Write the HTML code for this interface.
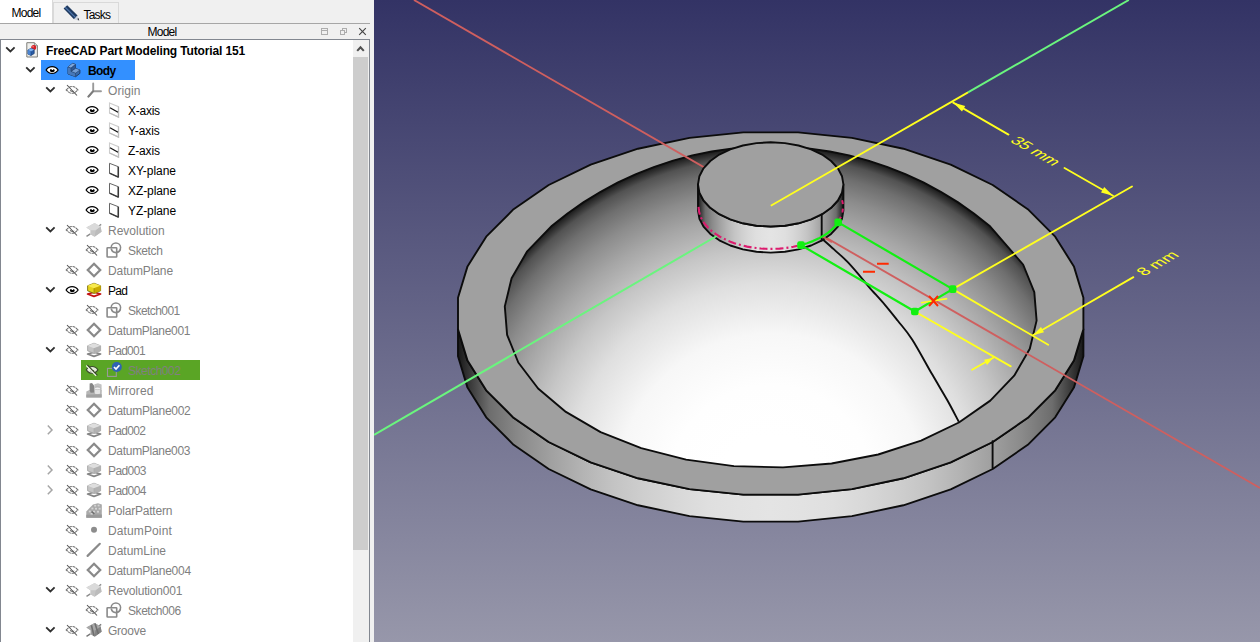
<!DOCTYPE html>
<html><head><meta charset="utf-8"><title>FreeCAD</title>
<style>
html,body{margin:0;padding:0}
body{width:1260px;height:642px;overflow:hidden;position:relative;background:#f0f0f0;font-family:"Liberation Sans",sans-serif;font-size:12px;color:#000}
#view{position:absolute;left:374px;top:0}
#tabs{position:absolute;left:0;top:0;width:370px;height:24px}
#tab1{position:absolute;left:0;top:0;width:53px;height:24px;background:#fff;border-right:1px solid #d9d9d9;box-sizing:border-box}
#tab2{position:absolute;left:53px;top:2px;width:66px;height:21px;background:#f0f0f0;border:1px solid #d9d9d9;border-bottom:none;box-sizing:border-box}
#tabline{position:absolute;left:0;top:23px;width:370px;height:1px;background:#a6a6a6}
#tab1 span{position:absolute;left:11.5px;top:6px;letter-spacing:-0.75px}
#tab2 span{position:absolute;left:29.5px;top:4.5px;letter-spacing:-0.8px}
#title{position:absolute;left:0;top:24px;width:370px;height:15px;background:#f0f0f0}
#title span{position:absolute;left:147.5px;top:1px;line-height:15px;letter-spacing:-0.75px}
#tree{position:absolute;left:0;top:39px;width:370px;height:610px;background:#fff;border:1px solid #828790;box-sizing:border-box}
#sb{position:absolute;left:353px;top:40px;width:16px;height:602px;background:#f0f0f0}
#sbt{position:absolute;left:353px;top:57px;width:15px;height:493px;background:#cdcdcd}
.ic{position:absolute;overflow:visible}
.hl{position:absolute;height:20px}
.t{position:absolute;height:20px;line-height:20px;white-space:nowrap}
.b{font-weight:bold}
.g{color:#808080}
</style></head><body>
<svg width="0" height="0" style="position:absolute">
<defs>
<symbol id="i-cv" viewBox="0 0 16 16"><path d="M4.2 5.3 L8.4 9.5 L12.6 5.3" fill="none" stroke="#2e2e2e" stroke-width="1.8"/></symbol>
<symbol id="i-cr" viewBox="0 0 16 16"><path d="M5.8 3.6 L10 7.9 L5.8 12.2" fill="none" stroke="#a6a6a6" stroke-width="1.5"/></symbol>
<symbol id="i-eye" viewBox="0 0 16 16"><path d="M2.1 8 C3.8 5.2 6 4.6 8.1 4.6 C10.2 4.6 12.4 5.2 14.1 8 C12.4 10.8 10.2 11.4 8.1 11.4 C6 11.4 3.8 10.8 2.1 8Z" fill="#fff" stroke="#000" stroke-width="1.25"/><path d="M5.9 8.4 C5.9 7.4 6.8 7 7.6 7 L7.6 7.9 L9.2 7.9 L9.2 6.9 C10.2 7 10.7 7.6 10.7 8.4 C10.7 9.4 9.6 9.9 8.3 9.9 C7 9.9 5.9 9.4 5.9 8.4Z" fill="#000"/></symbol>
<symbol id="i-hid" viewBox="0 0 16 16"><path d="M2.2 7.9 L5 5.4 C6 4.7 7 4.5 8.1 4.5 C9.2 4.5 10.2 4.7 11.2 5.4 L14 7.9 L11.2 10.4 C10.2 11.1 9.2 11.3 8.1 11.3 C7 11.3 6 11.1 5 10.4Z" fill="none" stroke="#707070" stroke-width="1.05" stroke-dasharray="3 0.7"/><path d="M6.3 8.2 C6.7 9.8 9.5 9.8 9.9 8.2" fill="none" stroke="#707070" stroke-width="1.05"/><path d="M7.6 6.4 L9.8 8.6" stroke="#fff" stroke-width="1.6"/><path d="M3 3 L13 13.5" stroke="#505050" stroke-width="1.05"/></symbol>
<symbol id="i-hidw" viewBox="0 0 16 16"><path d="M2.3 7.9 C3.9 5.2 6 4.5 8.1 4.5 C10.2 4.5 12.3 5.2 13.9 7.9 C12.3 10.6 10.2 11.3 8.1 11.3 C6 11.3 3.9 10.6 2.3 7.9Z" fill="#e3efd8" stroke="#3b4a2c" stroke-width="1.1"/><path d="M6.4 8.4 C6.8 9.8 9.4 9.8 9.8 8.4" fill="none" stroke="#3b4a2c" stroke-width="1.1"/><path d="M2.4 3.6 L12.2 13.8" stroke="#f4f8ef" stroke-width="1.5"/><path d="M3.4 3 L13.4 13.4" stroke="#3b4a2c" stroke-width="1.1"/></symbol>
<symbol id="i-doc" viewBox="0 0 16 16"><path d="M2.8 0.7 H10.4 L13.4 3.7 V15 H2.8Z" fill="#efefec" stroke="#7e7e7a" stroke-width="1"/><path d="M10.4 0.7 V3.7 H13.4" fill="#d4d4d0" stroke="#7e7e7a" stroke-width="0.8"/><circle cx="9.7" cy="5.5" r="2.5" fill="#d81e24"/><circle cx="9.1" cy="4.8" r="0.8" fill="#f08a8a"/><path d="M3.9 8 L7 6.3 L10.2 7.6 L10.2 11.6 L7 13.5 L3.9 12Z" fill="#2a5ca6" stroke="#173a6e" stroke-width="0.7" stroke-linejoin="round"/><path d="M3.9 8 L7 6.3 L10.2 7.6 L7 9.4Z" fill="#7fb0ec"/><path d="M3.9 8 L7 9.4 V13.5 L3.9 12Z" fill="#4a84d2"/><path d="M7 9.4 V13.5" stroke="#173a6e" stroke-width="0.5"/></symbol>
<symbol id="i-body" viewBox="0 0 16 16"><path d="M2 5 L6.6 1.4 L9.4 2.4 L9.4 6.4 L13.9 8 L13.9 11.4 L9.6 14.7 L2 12Z" fill="#3a6cae" stroke="#1f3c66" stroke-width="1" stroke-linejoin="round"/><path d="M2 5 L6.6 1.4 L9.4 2.4 L5 6.1Z" fill="#7ea6da"/><path d="M5 9.4 L9.4 6.4 L13.9 8 L9.6 11.2Z" fill="#739dd4"/><path d="M2 5 L5 6.1 V9.4 L9.6 11.2 V14.7 L2 12Z" fill="#4678ba"/><path d="M5 6.1 L9.4 2.4 V6.4 L5 9.4Z" fill="#2f5894"/><path d="M2 5 L5 6.1 V9.4 L9.6 11.2 V14.7 M5 6.1 L9.4 2.4 M5 9.4 L9.4 6.4 M9.6 11.2 L13.9 8" fill="none" stroke="#1f3c66" stroke-width="0.6"/></symbol>
<symbol id="i-origin" viewBox="0 0 16 16"><path d="M7.2 9.2 V1.4 M7.2 9.2 H15 M7.2 9.2 L2.4 14.6" fill="none" stroke="#9a9a9a" stroke-width="1.9" stroke-linecap="round"/><path d="M7.2 9.2 L2.4 14.6" stroke="#7c7c7c" stroke-width="1.9" stroke-linecap="round"/></symbol>
<symbol id="i-axis" viewBox="0 0 16 16"><path d="M3.5 0.9 L12.5 4.7 V15.1 L3.5 11Z" fill="none" stroke="#cdcdcd" stroke-width="1.1"/><path d="M12.5 4.7 V15.1 L3.5 11" fill="none" stroke="#bdbdbd" stroke-width="1.3"/><path d="M4 5.7 L12 10.3" stroke="#111" stroke-width="1.25"/></symbol>
<symbol id="i-plane" viewBox="0 0 16 16"><path d="M3.5 1.3 L12.3 4.7 V15.1 L3.5 11.1Z" fill="#fff" stroke="#666" stroke-width="1" stroke-linejoin="round"/><path d="M12.3 4.7 V15.1 L3.5 11.1" fill="none" stroke="#3a3a3a" stroke-width="1.5" stroke-linejoin="round"/></symbol>
<symbol id="i-rev" viewBox="0 0 16 16"><path d="M0.5 14.3 L4.4 11.8 M12.8 4 L15.2 2.4" stroke="#8c8c8c" stroke-width="1.4" fill="none"/><path d="M0.4 5.6 L8.6 1 L14.6 4.4 L15.6 9.8 L8.6 14.8 L4.5 12.3 L4.6 8.3Z" fill="#d0d0d0"/><path d="M8.6 14.8 L15.6 9.8 L14.6 4.4 L9.4 8.2Z" fill="#bcbcbc"/><path d="M0.4 5.6 L4.6 8.3 L4.5 12.3 L8.6 14.8 L9.4 8.2 L3 4.2Z" fill="#c6c6c6"/><path d="M0.4 5.6 L8.6 1 L14.6 4.4 L9.4 8.2 L4.6 8.3Z" fill="#dadada"/></symbol>
<symbol id="i-groove" viewBox="0 0 16 16"><path d="M0.5 14.3 L4.4 11.8 M12.8 4 L15.2 2.4" stroke="#777" stroke-width="1.4" fill="none"/><path d="M0.4 5.6 L8.6 1 L14.6 4.4 L15.6 9.8 L8.6 14.8 L4.5 12.3 L4.6 8.3Z" fill="#9a9a9a"/><path d="M8.6 14.8 L15.6 9.8 L14.6 4.4 L9.4 8.2Z" fill="#828282"/><path d="M0.4 5.6 L8.6 1 L14.6 4.4 L9.4 8.2 L4.6 8.3Z" fill="#a8a8a8"/><path d="M5.4 3.2 L8 13.8 M9 1.6 L12.4 12" stroke="#6f6f6f" stroke-width="1.6" fill="none"/></symbol>
<symbol id="i-sketch" viewBox="0 0 16 16"><circle cx="9.9" cy="5.6" r="4.7" fill="#fff" stroke="#8a8a8a" stroke-width="1.5"/><rect x="1.1" y="5.8" width="9.6" height="9.2" rx="0.5" fill="#fff" fill-opacity="0.5" stroke="#8a8a8a" stroke-width="1.6"/><path d="M5.3 6.9 A4.7 4.7 0 0 0 14.5 6.9" fill="none" stroke="#8a8a8a" stroke-width="1.5"/></symbol>
<symbol id="i-sketchk" viewBox="0 0 16 16"><rect x="1.5" y="6.4" width="8.8" height="8" fill="none" stroke="#9a9a9a" stroke-width="1.1"/><circle cx="10.8" cy="5" r="5" fill="#2f63b4"/><path d="M8 5 L10 7 L13.4 3.2" fill="none" stroke="#fff" stroke-width="1.7"/></symbol>
<symbol id="i-dplane" viewBox="0 0 16 16"><path d="M8 1.8 L14.2 8 L8 14.2 L1.8 8Z" fill="#fff" stroke="#8a8a8a" stroke-width="2.3" stroke-linejoin="miter"/></symbol>
<symbol id="i-pad" viewBox="0 0 16 16"><path d="M1.6 12 L8 10.2 L14.6 12 L8 14.4Z" fill="#fff" stroke="#c31212" stroke-width="1.7" stroke-linejoin="round"/><path d="M1.6 3.8 L8 1.2 L14.6 3.8 V8.8 L8 11.4 L1.6 8.8Z" fill="#e6d21c" stroke="#6e6200" stroke-width="0.8" stroke-linejoin="round"/><path d="M1.6 3.8 L8 1.2 L14.6 3.8 L8 6.2Z" fill="#f8ea4e"/><path d="M8 6.2 L14.6 3.8 V8.8 L8 11.4Z" fill="#c9aa00"/><path d="M8 6.2 V11.4" stroke="#8a7a00" stroke-width="0.6"/></symbol>
<symbol id="i-padg" viewBox="0 0 16 16"><path d="M1.6 12 L8 10.2 L14.6 12 L8 14.4Z" fill="#fff" stroke="#858585" stroke-width="1.7" stroke-linejoin="round"/><path d="M1.6 3.8 L8 1.2 L14.6 3.8 V8.8 L8 11.4 L1.6 8.8Z" fill="#c4c4c4" stroke="#a0a0a0" stroke-width="0.8" stroke-linejoin="round"/><path d="M1.6 3.8 L8 1.2 L14.6 3.8 L8 6.2Z" fill="#dedede"/><path d="M8 6.2 L14.6 3.8 V8.8 L8 11.4Z" fill="#b2b2b2"/><path d="M8 6.2 V11.4" stroke="#a8a8a8" stroke-width="0.6"/></symbol>
<symbol id="i-mirror" viewBox="0 0 16 16"><path d="M0.3 9.4 L3.4 8 H15.7 V15.6 H0.3Z" fill="#b6b6b6"/><path d="M3.6 1.6 L6 1.1 L8.4 4 V10.4 L4.6 10.8 L3.6 8Z" fill="#858585"/><path d="M8.4 2.2 L12 1.2 L15.6 2.6 V9.6 L8.4 9.6Z" fill="#c2c2c2"/><path d="M8.4 6.4 C8.4 4.6 14.6 4.6 14.6 6.4 V11.2 C14.6 13 8.4 13 8.4 11.2Z" fill="#e4e4e4" stroke="#a8a8a8" stroke-width="0.6"/><ellipse cx="11.5" cy="6.4" rx="3.1" ry="1.2" fill="#f1f1f1" stroke="#a8a8a8" stroke-width="0.5"/><path d="M0.3 12.6 L15.7 12.2 V15.6 H0.3Z" fill="#a2a2a2"/></symbol>
<symbol id="i-polar" viewBox="0 0 16 16"><path d="M0.3 15.7 V9.4 L7 2.4 L12 1.2 L15.8 2.4 V15.7Z" fill="#a9a9a9"/><path d="M0.3 12.8 L15.8 12.4 V15.7 H0.3Z" fill="#999"/><g fill="#d4d4d4"><rect x="8.2" y="2.8" width="2" height="1.8"/><rect x="11.6" y="2.6" width="2" height="1.8"/><rect x="5.4" y="5.6" width="2" height="1.8"/><rect x="9" y="5.8" width="2" height="1.8"/><rect x="12.6" y="5.8" width="2" height="1.8"/><rect x="2.8" y="8.6" width="2" height="1.8"/><rect x="7" y="8.8" width="2" height="1.8"/><rect x="11" y="8.8" width="2" height="1.8"/><rect x="4.6" y="11" width="2.2" height="1.6"/></g><path d="M5.6 9.6 L8.4 11.8" stroke="#6f6f6f" stroke-width="1.6"/></symbol>
<symbol id="i-dpoint" viewBox="0 0 16 16"><circle cx="8" cy="7.8" r="3" fill="#8c8c8c"/></symbol>
<symbol id="i-dline" viewBox="0 0 16 16"><path d="M1.6 13.9 L13.8 1.8" stroke="#8a8a8a" stroke-width="2.2" stroke-linecap="round"/></symbol>
<symbol id="i-pencil" viewBox="0 0 18 18"><path d="M1.6 4.6 L5.2 1.2 L15.6 11.6 L12 15.2Z" fill="#1f3a60"/><path d="M3.2 3.2 L13.6 13.6" stroke="#4c74aa" stroke-width="1.3"/><path d="M12 15.2 L15.6 11.6 L17.2 16.8Z" fill="#cfd6e0"/><path d="M15.4 15 L16.4 14 L17.2 16.8Z" fill="#111"/></symbol>
<symbol id="i-t1" viewBox="0 0 9 9"><rect x="1.5" y="1.5" width="6" height="6" fill="none" stroke="#adadad" stroke-width="1"/><path d="M1.5 3.5 H7.5" stroke="#adadad" stroke-width="1"/></symbol>
<symbol id="i-t2" viewBox="0 0 9 9"><rect x="3.5" y="1.5" width="4" height="4" fill="none" stroke="#adadad" stroke-width="1"/><rect x="1.5" y="3.5" width="4" height="4" fill="#f0f0f0" stroke="#adadad" stroke-width="1"/></symbol>
<symbol id="i-t3" viewBox="0 0 9 9"><path d="M1.2 1.2 L7.8 7.8 M7.8 1.2 L1.2 7.8" stroke="#444" stroke-width="1.15"/></symbol>
<symbol id="i-sbup" viewBox="0 0 16 17"><path d="M4.2 10.9 L7.5 7.3 L10.8 10.9" fill="none" stroke="#505050" stroke-width="2.1"/></symbol>
</defs>
</svg>

<div id="tabs"><div id="tab1"><span>Model</span></div><div id="tab2"><svg class="ic" style="left:8px;top:1px" width="18" height="18"><use href="#i-pencil"/></svg><span>Tasks</span></div><div id="tabline"></div></div>
<div id="title"><span>Model</span><svg class="ic" style="left:320px;top:3px" width="9" height="9"><use href="#i-t1"/></svg><svg class="ic" style="left:339px;top:3px" width="9" height="9"><use href="#i-t2"/></svg><svg class="ic" style="left:358px;top:3px" width="9" height="9"><use href="#i-t3"/></svg></div>
<div id="tree"></div>
<div id="sb"></div><div id="sbt"></div><svg class="ic" style="left:353px;top:40px" width="16" height="17"><use href="#i-sbup"/></svg>
<svg class="ic" style="left:2px;top:42px" width="16" height="16"><use href="#i-cv"/></svg><svg class="ic" style="left:24px;top:42px" width="16" height="16"><use href="#i-doc"/></svg><span class="t b" id="r0" style="left:46px;top:41px;letter-spacing:-0.142px">FreeCAD Part Modeling Tutorial 151</span>
<div class="hl" style="left:41px;top:60px;width:94px;background:#3390ff"></div><svg class="ic" style="left:22px;top:62px" width="16" height="16"><use href="#i-cv"/></svg><svg class="ic" style="left:44px;top:62px" width="16" height="16"><use href="#i-eye"/></svg><svg class="ic" style="left:66px;top:62px" width="16" height="16"><use href="#i-body"/></svg><span class="t b" id="r1" style="left:88px;top:61px;letter-spacing:-0.650px">Body</span>
<svg class="ic" style="left:42px;top:82px" width="16" height="16"><use href="#i-cv"/></svg><svg class="ic" style="left:64px;top:82px" width="16" height="16"><use href="#i-hid"/></svg><svg class="ic" style="left:86px;top:82px" width="16" height="16"><use href="#i-origin"/></svg><span class="t g" id="r2" style="left:108px;top:81px;letter-spacing:0.081px">Origin</span>
<svg class="ic" style="left:84px;top:102px" width="16" height="16"><use href="#i-eye"/></svg><svg class="ic" style="left:106px;top:102px" width="16" height="16"><use href="#i-axis"/></svg><span class="t " id="r3" style="left:128px;top:101px;letter-spacing:-0.257px">X-axis</span>
<svg class="ic" style="left:84px;top:122px" width="16" height="16"><use href="#i-eye"/></svg><svg class="ic" style="left:106px;top:122px" width="16" height="16"><use href="#i-axis"/></svg><span class="t " id="r4" style="left:128px;top:121px;letter-spacing:-0.075px">Y-axis</span>
<svg class="ic" style="left:84px;top:142px" width="16" height="16"><use href="#i-eye"/></svg><svg class="ic" style="left:106px;top:142px" width="16" height="16"><use href="#i-axis"/></svg><span class="t " id="r5" style="left:128px;top:141px;letter-spacing:-0.145px">Z-axis</span>
<svg class="ic" style="left:84px;top:162px" width="16" height="16"><use href="#i-eye"/></svg><svg class="ic" style="left:106px;top:162px" width="16" height="16"><use href="#i-plane"/></svg><span class="t " id="r6" style="left:128px;top:161px;letter-spacing:-0.033px">XY-plane</span>
<svg class="ic" style="left:84px;top:182px" width="16" height="16"><use href="#i-eye"/></svg><svg class="ic" style="left:106px;top:182px" width="16" height="16"><use href="#i-plane"/></svg><span class="t " id="r7" style="left:128px;top:181px;letter-spacing:-0.088px">XZ-plane</span>
<svg class="ic" style="left:84px;top:202px" width="16" height="16"><use href="#i-eye"/></svg><svg class="ic" style="left:106px;top:202px" width="16" height="16"><use href="#i-plane"/></svg><span class="t " id="r8" style="left:128px;top:201px;letter-spacing:-0.088px">YZ-plane</span>
<svg class="ic" style="left:42px;top:222px" width="16" height="16"><use href="#i-cv"/></svg><svg class="ic" style="left:64px;top:222px" width="16" height="16"><use href="#i-hid"/></svg><svg class="ic" style="left:86px;top:222px" width="16" height="16"><use href="#i-rev"/></svg><span class="t g" id="r9" style="left:108px;top:221px;letter-spacing:-0.010px">Revolution</span>
<svg class="ic" style="left:84px;top:242px" width="16" height="16"><use href="#i-hid"/></svg><svg class="ic" style="left:106px;top:242px" width="16" height="16"><use href="#i-sketch"/></svg><span class="t g" id="r10" style="left:128px;top:241px;letter-spacing:-0.365px">Sketch</span>
<svg class="ic" style="left:64px;top:262px" width="16" height="16"><use href="#i-hid"/></svg><svg class="ic" style="left:86px;top:262px" width="16" height="16"><use href="#i-dplane"/></svg><span class="t g" id="r11" style="left:108px;top:261px;letter-spacing:-0.105px">DatumPlane</span>
<svg class="ic" style="left:42px;top:282px" width="16" height="16"><use href="#i-cv"/></svg><svg class="ic" style="left:64px;top:282px" width="16" height="16"><use href="#i-eye"/></svg><svg class="ic" style="left:86px;top:282px" width="16" height="16"><use href="#i-pad"/></svg><span class="t " id="r12" style="left:108px;top:281px;letter-spacing:-0.686px">Pad</span>
<svg class="ic" style="left:84px;top:302px" width="16" height="16"><use href="#i-hid"/></svg><svg class="ic" style="left:106px;top:302px" width="16" height="16"><use href="#i-sketch"/></svg><span class="t g" id="r13" style="left:128px;top:301px;letter-spacing:-0.558px">Sketch001</span>
<svg class="ic" style="left:64px;top:322px" width="16" height="16"><use href="#i-hid"/></svg><svg class="ic" style="left:86px;top:322px" width="16" height="16"><use href="#i-dplane"/></svg><span class="t g" id="r14" style="left:108px;top:321px;letter-spacing:-0.297px">DatumPlane001</span>
<svg class="ic" style="left:42px;top:342px" width="16" height="16"><use href="#i-cv"/></svg><svg class="ic" style="left:64px;top:342px" width="16" height="16"><use href="#i-hid"/></svg><svg class="ic" style="left:86px;top:342px" width="16" height="16"><use href="#i-padg"/></svg><span class="t g" id="r15" style="left:108px;top:341px;letter-spacing:-0.762px">Pad001</span>
<div class="hl" style="left:81px;top:360px;width:119px;background:#5aa525"></div><svg class="ic" style="left:84px;top:362px" width="16" height="16"><use href="#i-hidw"/></svg><svg class="ic" style="left:106px;top:362px" width="16" height="16"><use href="#i-sketchk"/></svg><span class="t g" id="r16" style="left:128px;top:361px;letter-spacing:-0.469px">Sketch002</span>
<svg class="ic" style="left:64px;top:382px" width="16" height="16"><use href="#i-hid"/></svg><svg class="ic" style="left:86px;top:382px" width="16" height="16"><use href="#i-mirror"/></svg><span class="t g" id="r17" style="left:108px;top:381px;letter-spacing:0.104px">Mirrored</span>
<svg class="ic" style="left:64px;top:402px" width="16" height="16"><use href="#i-hid"/></svg><svg class="ic" style="left:86px;top:402px" width="16" height="16"><use href="#i-dplane"/></svg><span class="t g" id="r18" style="left:108px;top:401px;letter-spacing:-0.274px">DatumPlane002</span>
<svg class="ic" style="left:42px;top:422px" width="16" height="16"><use href="#i-cr"/></svg><svg class="ic" style="left:64px;top:422px" width="16" height="16"><use href="#i-hid"/></svg><svg class="ic" style="left:86px;top:422px" width="16" height="16"><use href="#i-padg"/></svg><span class="t g" id="r19" style="left:108px;top:421px;letter-spacing:-0.696px">Pad002</span>
<svg class="ic" style="left:64px;top:442px" width="16" height="16"><use href="#i-hid"/></svg><svg class="ic" style="left:86px;top:442px" width="16" height="16"><use href="#i-dplane"/></svg><span class="t g" id="r20" style="left:108px;top:441px;letter-spacing:-0.297px">DatumPlane003</span>
<svg class="ic" style="left:42px;top:462px" width="16" height="16"><use href="#i-cr"/></svg><svg class="ic" style="left:64px;top:462px" width="16" height="16"><use href="#i-hid"/></svg><svg class="ic" style="left:86px;top:462px" width="16" height="16"><use href="#i-padg"/></svg><span class="t g" id="r21" style="left:108px;top:461px;letter-spacing:-0.579px">Pad003</span>
<svg class="ic" style="left:42px;top:482px" width="16" height="16"><use href="#i-cr"/></svg><svg class="ic" style="left:64px;top:482px" width="16" height="16"><use href="#i-hid"/></svg><svg class="ic" style="left:86px;top:482px" width="16" height="16"><use href="#i-padg"/></svg><span class="t g" id="r22" style="left:108px;top:481px;letter-spacing:-0.579px">Pad004</span>
<svg class="ic" style="left:64px;top:502px" width="16" height="16"><use href="#i-hid"/></svg><svg class="ic" style="left:86px;top:502px" width="16" height="16"><use href="#i-polar"/></svg><span class="t g" id="r23" style="left:108px;top:501px;letter-spacing:-0.209px">PolarPattern</span>
<svg class="ic" style="left:64px;top:522px" width="16" height="16"><use href="#i-hid"/></svg><svg class="ic" style="left:86px;top:522px" width="16" height="16"><use href="#i-dpoint"/></svg><span class="t g" id="r24" style="left:108px;top:521px;letter-spacing:0.120px">DatumPoint</span>
<svg class="ic" style="left:64px;top:542px" width="16" height="16"><use href="#i-hid"/></svg><svg class="ic" style="left:86px;top:542px" width="16" height="16"><use href="#i-dline"/></svg><span class="t g" id="r25" style="left:108px;top:541px;letter-spacing:-0.003px">DatumLine</span>
<svg class="ic" style="left:64px;top:562px" width="16" height="16"><use href="#i-hid"/></svg><svg class="ic" style="left:86px;top:562px" width="16" height="16"><use href="#i-dplane"/></svg><span class="t g" id="r26" style="left:108px;top:561px;letter-spacing:-0.243px">DatumPlane004</span>
<svg class="ic" style="left:42px;top:582px" width="16" height="16"><use href="#i-cv"/></svg><svg class="ic" style="left:64px;top:582px" width="16" height="16"><use href="#i-hid"/></svg><svg class="ic" style="left:86px;top:582px" width="16" height="16"><use href="#i-rev"/></svg><span class="t g" id="r27" style="left:108px;top:581px;letter-spacing:-0.195px">Revolution001</span>
<svg class="ic" style="left:84px;top:602px" width="16" height="16"><use href="#i-hid"/></svg><svg class="ic" style="left:106px;top:602px" width="16" height="16"><use href="#i-sketch"/></svg><span class="t g" id="r28" style="left:128px;top:601px;letter-spacing:-0.435px">Sketch006</span>
<svg class="ic" style="left:42px;top:622px" width="16" height="16"><use href="#i-cv"/></svg><svg class="ic" style="left:64px;top:622px" width="16" height="16"><use href="#i-hid"/></svg><svg class="ic" style="left:86px;top:622px" width="16" height="16"><use href="#i-groove"/></svg><span class="t g" id="r29" style="left:108px;top:621px;letter-spacing:-0.243px">Groove</span>
<svg id="view" width="886" height="642" viewBox="374 0 886 642">
<defs>
<linearGradient id="bg" x1="0" y1="0" x2="0" y2="1"><stop offset="0" stop-color="#333365"/><stop offset="1" stop-color="#9797aa"/></linearGradient>
<radialGradient id="dome" gradientUnits="userSpaceOnUse" cx="770.7" cy="487.2" r="340.9"><stop offset="0%" stop-color="#ffffff"/><stop offset="15%" stop-color="#ffffff"/><stop offset="30%" stop-color="#fefefe"/><stop offset="45%" stop-color="#f7f7f7"/><stop offset="60%" stop-color="#dfdfdf"/><stop offset="70%" stop-color="#c6c6c6"/><stop offset="80%" stop-color="#a6a6a6"/><stop offset="87%" stop-color="#8c8c8c"/><stop offset="93%" stop-color="#6f6f6f"/><stop offset="97%" stop-color="#525252"/><stop offset="100%" stop-color="#181818"/></radialGradient>
<linearGradient id="rimside" gradientUnits="userSpaceOnUse" x1="458" y1="0" x2="1083.4" y2="0"><stop offset="0%" stop-color="#181818"/><stop offset="5%" stop-color="#6d6d6d"/><stop offset="10%" stop-color="#8b8b8b"/><stop offset="15%" stop-color="#a1a1a1"/><stop offset="20%" stop-color="#b4b4b4"/><stop offset="25%" stop-color="#c4c4c4"/><stop offset="30%" stop-color="#cfcfcf"/><stop offset="35%" stop-color="#d8d8d8"/><stop offset="40%" stop-color="#dfdfdf"/><stop offset="45%" stop-color="#e2e2e2"/><stop offset="50%" stop-color="#e4e4e4"/><stop offset="55%" stop-color="#e2e2e2"/><stop offset="60%" stop-color="#dfdfdf"/><stop offset="65%" stop-color="#d8d8d8"/><stop offset="70%" stop-color="#cfcfcf"/><stop offset="75%" stop-color="#c4c4c4"/><stop offset="80%" stop-color="#b4b4b4"/><stop offset="85%" stop-color="#a1a1a1"/><stop offset="90%" stop-color="#8b8b8b"/><stop offset="95%" stop-color="#6d6d6d"/><stop offset="100%" stop-color="#181818"/></linearGradient>
<linearGradient id="cylside" gradientUnits="userSpaceOnUse" x1="698" y1="0" x2="843.4" y2="0"><stop offset="0%" stop-color="#181818"/><stop offset="5%" stop-color="#6d6d6d"/><stop offset="10%" stop-color="#8b8b8b"/><stop offset="15%" stop-color="#a1a1a1"/><stop offset="20%" stop-color="#b4b4b4"/><stop offset="25%" stop-color="#c4c4c4"/><stop offset="30%" stop-color="#cfcfcf"/><stop offset="35%" stop-color="#d8d8d8"/><stop offset="40%" stop-color="#dfdfdf"/><stop offset="45%" stop-color="#e2e2e2"/><stop offset="50%" stop-color="#e4e4e4"/><stop offset="55%" stop-color="#e2e2e2"/><stop offset="60%" stop-color="#dfdfdf"/><stop offset="65%" stop-color="#d8d8d8"/><stop offset="70%" stop-color="#cfcfcf"/><stop offset="75%" stop-color="#c4c4c4"/><stop offset="80%" stop-color="#b4b4b4"/><stop offset="85%" stop-color="#a1a1a1"/><stop offset="90%" stop-color="#8b8b8b"/><stop offset="95%" stop-color="#6d6d6d"/><stop offset="100%" stop-color="#181818"/></linearGradient>
</defs>
<rect x="374" y="0" width="886" height="642" fill="url(#bg)"/>
<path d="M1083.4 329.3 L1073.9 360.6 L1055.2 390.3 L1027.8 417.8 L992.7 442 L950.7 462.4 L903.4 478.3 L851.9 489.1 L798.1 494.6 L743.3 494.6 L689.5 489.1 L638 478.3 L590.7 462.4 L548.7 442 L513.6 417.8 L486.2 390.3 L467.5 360.6 L458 329.3 L458 356.3 L467.5 387.6 L486.2 417.3 L513.6 444.8 L548.7 469 L590.7 489.4 L638 505.3 L689.5 516.1 L743.3 521.6 L798.1 521.6 L851.9 516.1 L903.4 505.3 L950.7 489.4 L992.7 469 L1027.8 444.8 L1055.2 417.3 L1073.9 387.6 L1083.4 356.3Z" fill="url(#rimside)" stroke="#0c0c0c" stroke-width="1.9" stroke-linejoin="round" stroke-linecap="round"/>
<path d="M1083.4 329.3 L1073.9 360.6 L1055.2 390.3 L1027.8 417.8 L992.7 442 L950.7 462.4 L903.4 478.3 L851.9 489.1 L798.1 494.6 L743.3 494.6 L689.5 489.1 L638 478.3 L590.7 462.4 L548.7 442 L513.6 417.8 L486.2 390.3 L467.5 360.6 L458 329.3 L458 297.7 L467.5 266.4 L486.2 236.7 L513.6 209.2 L548.7 185 L590.7 164.6 L638 148.7 L689.5 137.9 L743.3 132.4 L798.1 132.4 L851.9 137.9 L903.4 148.7 L950.7 164.6 L992.7 185 L1027.8 209.2 L1055.2 236.7 L1073.9 266.4 L1083.4 297.7Z" fill="#a0a0a0" stroke="#0c0c0c" stroke-width="1.9" stroke-linejoin="round" stroke-linecap="round"/>
<path d="M552 225.7 L567.5 213.5 L583.7 202.1 L600.6 191.8 L618 182.4 L636 174.1 L654.4 166.8 L673.1 160.6 L692.3 155.4 L711.6 151.5 L731.2 148.6 L750.9 146.9 L770.7 146.3 L790.5 146.9 L810.2 148.6 L829.8 151.5 L849.1 155.4 L868.3 160.6 L887 166.8 L905.4 174.1 L923.4 182.4 L940.8 191.8 L957.7 202.1 L973.9 213.5 L989.4 225.7 L1023.1 264.5 L1034.3 292.2 L1036.6 320.6 L1029.8 348.8 L1014.2 375.7 L990.3 400.6 L958.9 422.5 L921.1 440.6 L878.2 454.5 L831.6 463.5 L783 467.4 L733.9 466.1 L686.1 459.6 L641.2 448.1 L600.6 432.1 L565.9 411.9 L538.1 388.5 L518.3 362.5 L507.1 334.8 L504.8 306.4 L511.6 278.2 L527.2 251.3Z" fill="url(#dome)" stroke="#0c0c0c" stroke-width="1.9" stroke-linejoin="round" stroke-linecap="round"/>
<path d="M992.6 441.1 V468.1" stroke="#0c0c0c" stroke-width="1.9" stroke-linejoin="round" stroke-linecap="round" fill="none"/>
<path d="M821.8 238.5 C823.8 240.3 829.8 245.5 834 249.4 C838.2 253.3 843 257.2 847.3 261.7 C851.6 266.1 856.3 271.8 860 276.1 C863.7 280.5 865.6 283 869.7 287.8 C873.9 292.6 880.2 299.3 884.9 304.8 C889.6 310.3 893.4 315.2 898 321 C902.6 326.8 906.6 330.8 912.3 339.7 C918 348.6 926.5 364.6 932.3 374.6 C938.1 384.7 942.9 392.3 947.2 400 C951.6 407.7 956.5 417.5 958.4 421" fill="none" stroke="#0c0c0c" stroke-width="1.9" stroke-linejoin="round" stroke-linecap="round"/>
<path d="M414 0 L1260 488" stroke="#cf5f5f" stroke-width="1.9" fill="none"/>
<path d="M843.4 184.4 L842 192.6 L837.9 200.5 L831.1 207.8 L822.1 214.2 L811.1 219.4 L798.5 223.3 L784.9 225.7 L770.7 226.5 L756.5 225.7 L742.9 223.3 L730.3 219.4 L719.3 214.2 L710.3 207.8 L703.5 200.5 L699.4 192.6 L698 184.4 L698 210.5 L699.4 218.7 L703.5 226.6 L710.3 233.9 L719.3 240.3 L730.3 245.5 L742.9 249.4 L756.5 251.8 L770.7 252.6 L784.9 251.8 L798.5 249.4 L811.1 245.5 L822.1 240.3 L831.1 233.9 L837.9 226.6 L842 218.7 L843.4 210.5Z" fill="url(#cylside)" stroke="#0c0c0c" stroke-width="1.9" stroke-linejoin="round" stroke-linecap="round"/>
<path d="M843.4 184.4 L842 192.6 L837.9 200.5 L831.1 207.8 L822.1 214.2 L811.1 219.4 L798.5 223.3 L784.9 225.7 L770.7 226.5 L756.5 225.7 L742.9 223.3 L730.3 219.4 L719.3 214.2 L710.3 207.8 L703.5 200.5 L699.4 192.6 L698 184.4 L699.4 176.2 L703.5 168.3 L710.3 161 L719.3 154.6 L730.3 149.4 L742.9 145.5 L756.5 143.1 L770.7 142.3 L784.9 143.1 L798.5 145.5 L811.1 149.4 L822.1 154.6 L831.1 161 L837.9 168.3 L842 176.2 L843.4 184.4Z" fill="#a0a0a0" stroke="#0c0c0c" stroke-width="1.9" stroke-linejoin="round" stroke-linecap="round"/>
<path d="M821.7 214.4 V240.5" stroke="#0c0c0c" stroke-width="1.9" stroke-linejoin="round" stroke-linecap="round" fill="none"/>
<path d="M374 435 L718.4 235" stroke="#6af57e" stroke-width="2" fill="none"/>
<path d="M698.6 206.8 L698.8 209.5 L699.2 212.3 L700 215 L701 217.6 L702.4 220.3 L704 222.8 L706 225.3 L708.2 227.8 L710.6 230.1 L713.4 232.3 L716.3 234.5 L719.5 236.5 L723 238.3 L726.6 240.1 L730.4 241.7 L734.4 243.2 L738.5 244.5 L742.8 245.6 L747.1 246.6 L751.6 247.4 L756.2 248 L760.8 248.5 L765.5 248.8 L770.2 248.9 L774.9 248.8 L779.6 248.6 L784.2 248.2 L788.8 247.6 L793.3 246.8 L797.7 245.8" fill="none" stroke="#dc1c6e" stroke-width="2.1" stroke-dasharray="8 3 2 3"/>
<path d="M842.1 200.2 L842.7 202.9 L843 205.7 L842.9 208.5 L842.6 211.2 L842 213.9 L841 216.6 L839.7 219.3 L838.2 221.9" fill="none" stroke="#dc1c6e" stroke-width="2" stroke-dasharray="4 4.5"/>
<path d="M822 236.3 L832 242.1" stroke="#cf5f5f" stroke-width="1.9" fill="none"/>
<path d="M770.8 205.8 L968 92.4" stroke="#ffff1e" stroke-width="1.8" fill="none"/>
<path d="M968 92.4 L1128.8 0" stroke="#6af57e" stroke-width="2" fill="none"/>
<path d="M952.7 289.1 L1132 186.5" stroke="#ffff1e" stroke-width="1.8" fill="none" stroke-linecap="round"/>
<path d="M952.7 289.1 L1048.2 344.8" stroke="#ffff1e" stroke-width="1.8" fill="none" stroke-linecap="round"/>
<path d="M914.8 311.5 L1010.8 366.4" stroke="#ffff1e" stroke-width="1.8" fill="none" stroke-linecap="round"/>
<path d="M953.2 102.6 L1008.5 134.6 M1064.5 168 L1113 195.8" stroke="#ffff1e" stroke-width="1.8" fill="none" stroke-linecap="round"/>
<path d="M953.2 102.6 L965.2 105.9 L962 111.4 Z" fill="#ffff1e"/>
<path d="M1113 195.8 L1101 192.5 L1104.2 187 Z" fill="#ffff1e"/>
<path d="M1133.4 277.1 L1033 335.2" stroke="#ffff1e" stroke-width="1.8" fill="none" stroke-linecap="round"/>
<path d="M1033 335.2 L1041 327.1 L1044 332.3 Z" fill="#ffff1e"/>
<path d="M972.1 369.8 L993.3 357.8" stroke="#ffff1e" stroke-width="1.8" fill="none" stroke-linecap="round"/>
<path d="M993.3 357.8 L987 364.9 L984 359.7 Z" fill="#ffff1e"/>
<text transform="matrix(0.8660 0.5000 -0.8227 0.4750 1009.3 141.2)" font-family="'Liberation Sans',sans-serif" font-size="16.5" fill="#ffff1e">35 mm</text>
<text transform="matrix(0.8660 -0.5000 0.8227 0.4750 1144.2 276.3)" font-family="'Liberation Sans',sans-serif" font-size="16.5" fill="#ffff1e">8 mm</text>
<path d="M838.2 222.4 L835.4 226.1 L831.9 229.5 L827.9 232.8 L823.4 235.8 L818.4 238.6 L812.9 241.1 L807.1 243.2 L801 245.1" stroke="#12f012" stroke-width="2.2" fill="none" stroke-linecap="round" stroke-linejoin="round"/>
<path d="M838.2 222.4 L952.7 289.1 L914.8 311.5 L801 245.1" stroke="#12f012" stroke-width="2.2" fill="none" stroke-linecap="round" stroke-linejoin="round"/>
<rect x="834.4" y="218.6" width="7.6" height="7.6" rx="2.2" fill="#12f012"/>
<rect x="797.2" y="241.3" width="7.6" height="7.6" rx="2.2" fill="#12f012"/>
<rect x="948.9" y="285.3" width="7.6" height="7.6" rx="2.2" fill="#12f012"/>
<rect x="911" y="307.7" width="7.6" height="7.6" rx="2.2" fill="#12f012"/>
<path d="M877 263.7 H888.7 M863 271.7 H875" stroke="#ff2a00" stroke-width="2" fill="none"/>
<path d="M921 302.8 L947.2 298.6" stroke="#ffff1e" stroke-width="1.6" fill="none"/>
<path d="M929 296 L938 306 M938 296 L929 306" stroke="#ff2a00" stroke-width="2" fill="none"/>
</svg>
</body></html>
